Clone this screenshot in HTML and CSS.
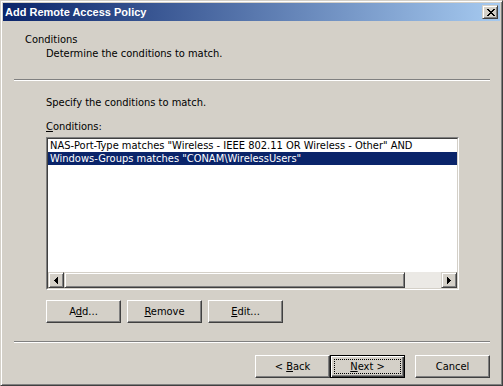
FILE: index.html
```html
<!DOCTYPE html>
<html lang="en">
<head>
  <meta charset="UTF-8">
  <title>Add Remote Access Policy</title>
  <link rel="stylesheet" href="styles.css">
</head>
<body>
  <div class="window">
    <div class="titlebar">
      <span class="title">Add Remote Access Policy</span>
      <button class="close-btn" aria-label="Close">
        <svg width="8" height="7" viewBox="0 0 8 7" shape-rendering="crispEdges">
          <path d="M0 0h2v1H0zM6 0h2v1H6zM1 1h2v1H1zM5 1h2v1H5zM2 2h4v1H2zM3 3h2v1H3zM2 4h4v1H2zM1 5h2v1H1zM5 5h2v1H5zM0 6h2v1H0zM6 6h2v1H6z" fill="#000"/>
        </svg>
      </button>
    </div>

    <!-- Wizard page header -->
    <div class="header">
      <div class="header-title">Conditions</div>
      <div class="header-sub">Determine the conditions to match.</div>
    </div>
    <div class="separator"></div>

    <div class="page">
      <p class="intro">Specify the conditions to match.</p>
      <label class="field-label"><u>C</u>onditions:</label>

      <div class="listbox">
        <div class="listbox-inner">
          <div class="list-items">
            <div class="list-item">NAS-Port-Type matches "Wireless - IEEE 802.11 OR Wireless - Other" AND</div>
            <div class="list-item selected">Windows-Groups matches "CONAM\WirelessUsers"</div>
          </div>
          <div class="hscroll">
            <div class="sb-btn">
              <svg width="4" height="7" viewBox="0 0 4 7" shape-rendering="crispEdges"><path d="M3 0h1v7H3zM2 1h1v5H2zM1 2h1v3H1zM0 3h1v1H0z" fill="#000"/></svg>
            </div>
            <div class="sb-thumb"></div>
            <div class="sb-track"></div>
            <div class="sb-btn">
              <svg width="4" height="7" viewBox="0 0 4 7" shape-rendering="crispEdges"><path d="M0 0h1v7H0zM1 1h1v5H1zM2 2h1v3H2zM3 3h1v1H3z" fill="#000"/></svg>
            </div>
          </div>
        </div>
      </div>

      <div class="btn-row">
        <button class="btn">A<u>d</u>d...</button>
        <button class="btn"><u>R</u>emove</button>
        <button class="btn"><u>E</u>dit...</button>
      </div>
    </div>

    <div class="separator"></div>

    <div class="footer">
      <button class="btn">&lt; <u>B</u>ack</button>
      <button class="btn default"><span class="focus"><u>N</u>ext &gt;</span></button>
      <button class="btn cancel">Cancel</button>
    </div>
  </div>
</body>
</html>
```

FILE: styles.css
```css
body {
  margin: 0;
  font-family: "DejaVu Sans Condensed", "Liberation Sans", sans-serif;
  font-size: 11px;
  color: #000;
  background: #d4d0c8;
}

.window {
  width: 503px;
  height: 386px;
  box-sizing: border-box;
  background: #d4d0c8;
  border: 1px solid;
  border-color: #d4d0c8 #404040 #404040 #d4d0c8;
  box-shadow: inset 1px 1px #fff, inset -1px -1px #808080;
  padding: 2px;
  display: flex;
  flex-direction: column;
}

.titlebar {
  height: 18px;
  display: flex;
  align-items: center;
  justify-content: space-between;
  padding: 0 2px;
  background: linear-gradient(to right, #0a246a, #a6caf0);
}

.title {
  color: #fff;
  font-weight: bold;
  font-family: "Liberation Sans", sans-serif;
  font-size: 11px;
}

.close-btn {
  width: 16px;
  height: 14px;
  padding: 0 0 0 1px;
  margin: 0;
  display: flex;
  align-items: center;
  justify-content: center;
  background: #d4d0c8;
  border: 1px solid;
  border-color: #d4d0c8 #404040 #404040 #d4d0c8;
  box-shadow: inset 1px 1px #fff, inset -1px -1px #808080;
}

.header {
  padding: 12px 0 0 22px;
  line-height: 14px;
}

.header-sub {
  padding-left: 21px;
}

.separator {
  margin: 18px 10px 0 11px;
  height: 1px;
  border-top: 1px solid #808080;
  border-bottom: 1px solid #fff;
  height: 0;
}

.page {
  padding-left: 43px;
  line-height: 14px;
}

.intro {
  margin: 15px 0 0;
}

.field-label {
  display: block;
  margin-top: 10px;
}

.listbox {
  margin-top: 3px;
  width: 413px;
  height: 153px;
  box-sizing: border-box;
  border: 1px solid;
  border-color: #808080 #fff #fff #808080;
}

.listbox-inner {
  height: 100%;
  box-sizing: border-box;
  border: 1px solid;
  border-color: #404040 #d4d0c8 #d4d0c8 #404040;
  background: #fff;
  display: flex;
  flex-direction: column;
}

.list-items {
  flex: 1;
  overflow: hidden;
}

.list-item {
  height: 13px;
  line-height: 13px;
  padding-left: 2px;
  white-space: nowrap;
}

.list-item.selected {
  background: #0a246a;
  color: #fff;
}

.hscroll {
  height: 16px;
  display: flex;
}

.sb-btn,
.sb-thumb {
  box-sizing: border-box;
  background: #d4d0c8;
  border: 1px solid;
  border-color: #d4d0c8 #404040 #404040 #d4d0c8;
  box-shadow: inset 1px 1px #fff, inset -1px -1px #808080;
}

.sb-btn {
  width: 16px;
  display: flex;
  align-items: center;
  justify-content: center;
}

.sb-thumb {
  width: 341px;
}

.sb-track {
  flex: 1;
  background: #ebe9e5;
}

.btn-row {
  margin-top: 10px;
  display: flex;
  gap: 6px;
}

.btn {
  width: 75px;
  height: 23px;
  margin: 0;
  padding: 0;
  box-sizing: border-box;
  font-family: inherit;
  font-size: 11px;
  color: #000;
  background: #d4d0c8;
  border: 1px solid;
  border-color: #fff #404040 #404040 #fff;
  box-shadow: inset -1px -1px #808080;
}

.btn.default {
  border: 1px solid #000;
  box-shadow: inset 1px 1px #fff, inset -1px -1px #404040, inset -2px -2px #808080;
  display: flex;
  padding: 3px;
}

.focus {
  flex: 1;
  display: flex;
  align-items: center;
  justify-content: center;
  border: 1px dotted #000;
}

.footer {
  margin: 12px 10px 0 0;
  display: flex;
  justify-content: flex-end;
}

.btn.cancel {
  margin-left: 10px;
}
```
